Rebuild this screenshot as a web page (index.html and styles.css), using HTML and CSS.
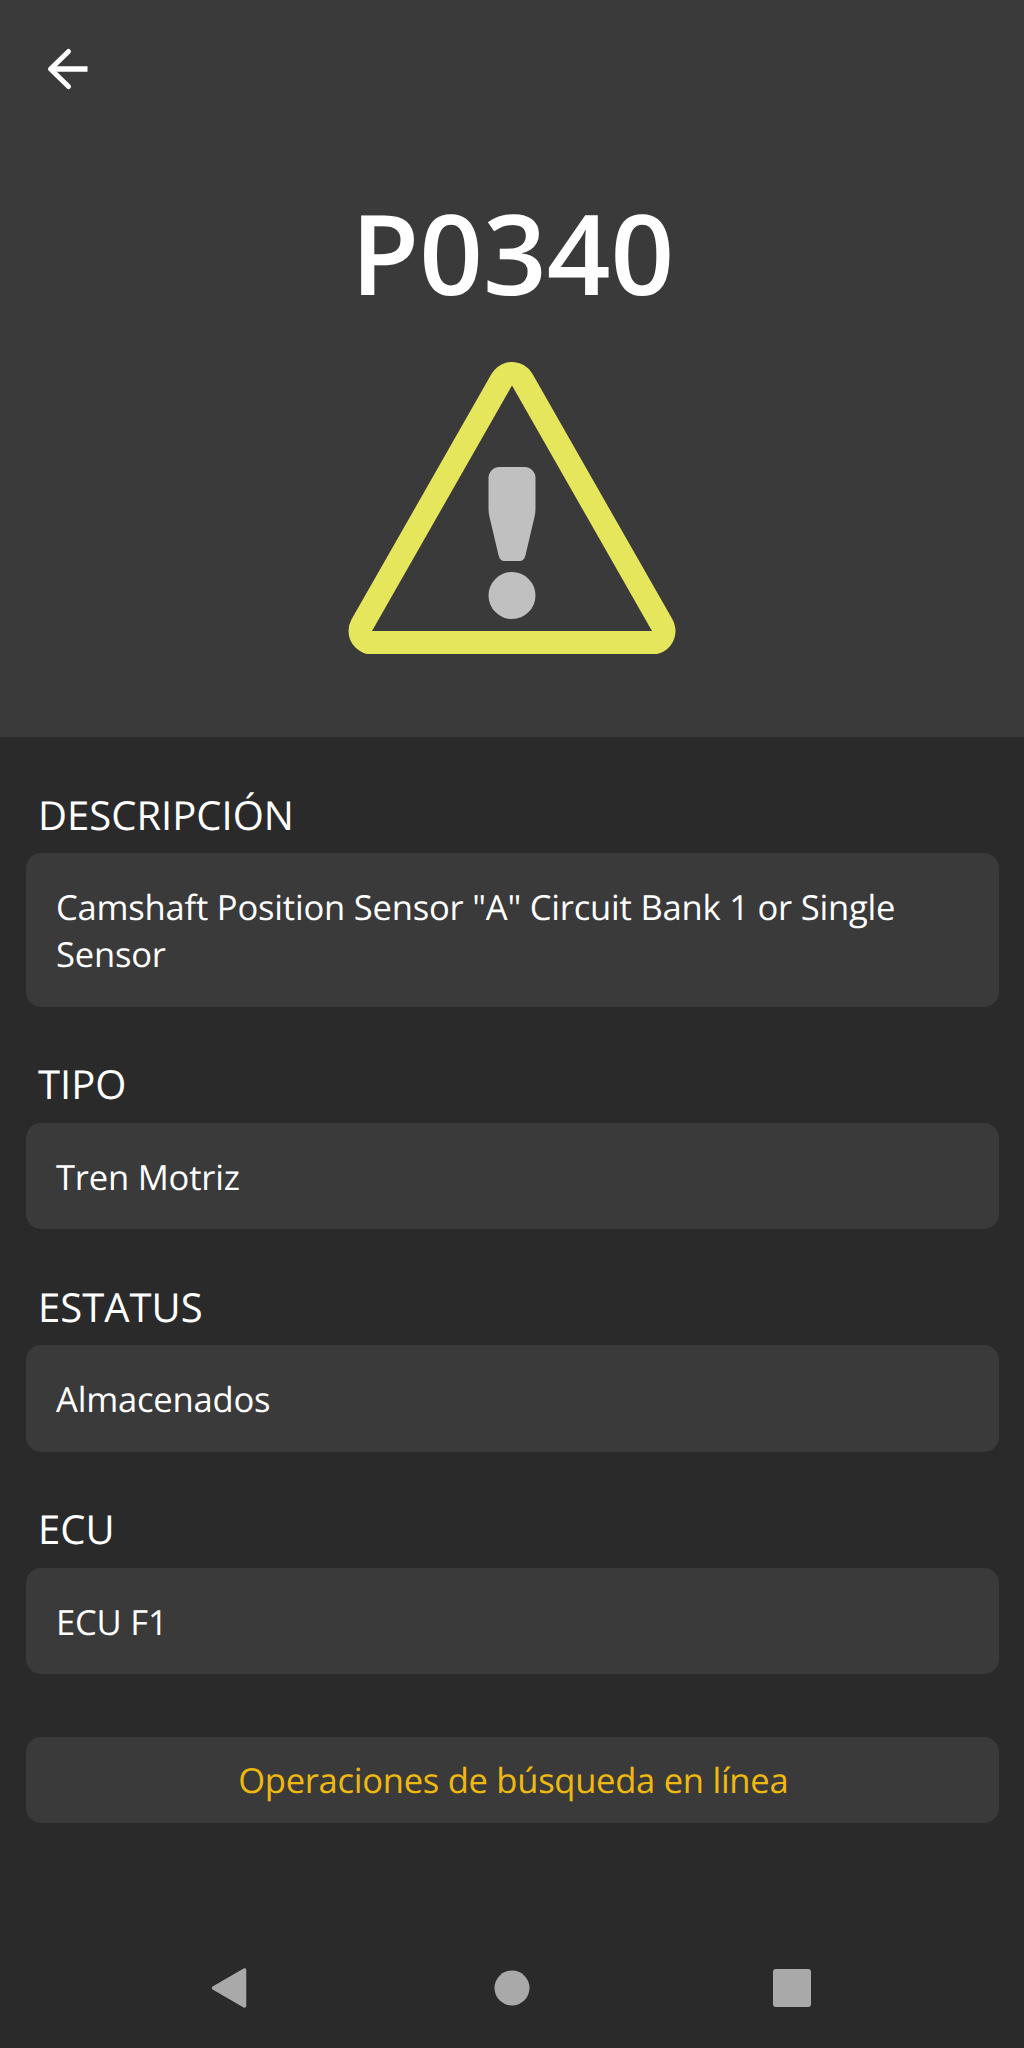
FILE: index.html
```html
<!DOCTYPE html>
<html lang="es">
<head>
    <meta charset="UTF-8">
    <meta name="viewport" content="width=device-width, initial-scale=1.0">
    <title>P0340</title>
    <link rel="stylesheet" href="styles.css">
</head>
<body>
    <header class="header">
        <a class="back" href="#" aria-label="Volver">
            <svg width="44" height="44" viewBox="0 0 44 44" fill="none" stroke="#fff">
                <path d="M43.500 22H8" stroke-width="5.500"/>
                <path d="M24.500 4.500L6.500 22l18 17.500" stroke-width="5" stroke-linecap="round" stroke-linejoin="round"/>
            </svg>
        </a>
        <h1 class="code">P0340</h1>
        <svg class="warning" width="328" height="292" viewBox="0 0 328 292">
            <path class="triangle" d="M164 23.500L304 269H24Z"/>
            <path class="mark" d="M151.500 105h25a11 11 0 0 1 11 11v31q0 4-1 8l-9 38q-1.300 6-6 6h-15q-4.700 0-6-6l-9-38q-1-4-1-8v-31a11 11 0 0 1 11-11z"/>
            <circle class="mark" cx="164" cy="233.500" r="23.500"/>
        </svg>
    </header>
    <main class="content">
        <section class="item">
            <h2>DESCRIPCIÓN</h2>
            <div class="card">Camshaft Position Sensor "A" Circuit Bank 1 or Single Sensor</div>
        </section>
        <section class="item">
            <h2>TIPO</h2>
            <div class="card">Tren Motriz</div>
        </section>
        <section class="item">
            <h2>ESTATUS</h2>
            <div class="card">Almacenados</div>
        </section>
        <section class="item">
            <h2>ECU</h2>
            <div class="card">ECU F1</div>
        </section>
        <button class="search">Operaciones de búsqueda en línea</button>
    </main>
    <nav class="navbar">
        <svg width="44" height="44" viewBox="0 0 44 44">
            <path d="M3.500 22L34.500 4v36z" stroke="#a9a9a9" stroke-width="3.500" stroke-linejoin="round"/>
        </svg>
        <svg width="44" height="44" viewBox="0 0 44 44">
            <circle cx="22" cy="22" r="17.500"/>
        </svg>
        <svg width="44" height="44" viewBox="0 0 44 44">
            <rect x="3" y="3" width="38" height="38" rx="3"/>
        </svg>
    </nav>
</body>
</html>
```
FILE: styles.css
```css
* {
    box-sizing: border-box;
}
body {
    font-family: "Open Sans", sans-serif;
    margin: 0;
    height: 2048px;
    display: flex;
    flex-direction: column;
    background-color: #2a2a2a;
    color: #fff;
    text-rendering: geometricPrecision;
}
.header {
    height: 737px;
    background-color: #3a3a3a;
    display: flex;
    flex-direction: column;
    align-items: center;
}
.back {
    align-self: flex-start;
    margin: 47px 0 0 44px;
    height: 44px;
}
.code {
    margin: 85px 0 0;
    padding-left: 1px;
    font-size: 111.5px;
    font-weight: 600;
    line-height: 153px;
}
.warning {
    margin-top: 33px;
}
.triangle {
    fill: #3a3a3a;
    stroke: #e5e65b;
    stroke-width: 47px;
    stroke-linejoin: round;
    paint-order: stroke;
}
.mark {
    fill: #c0c0c0;
}
.content {
    flex: 1;
    padding: 0 25.5px 0 26px;
}
.item {
    padding-top: 50.7px;
}
.item h2 {
    margin: 0 0 10.9px 12px;
    font-size: 40px;
    font-weight: 400;
    line-height: 54.4px;
}
.card {
    padding: 31px 30px 28.2px;
    border-radius: 15px;
    background-color: #3a3a3a;
    font-size: 34.6px;
    letter-spacing: -0.22px;
    line-height: 47.3px;
}
.search {
    display: block;
    width: 100%;
    height: 86px;
    margin-top: 62.7px;
    padding: 2px 0 0 2px;
    border: none;
    border-radius: 15px;
    background-color: #3a3a3a;
    color: #f0b90f;
    font-family: inherit;
    font-size: 34.6px;
    letter-spacing: -0.29px;
    text-rendering: inherit;
}
.navbar {
    height: 120px;
    padding: 0 210px;
    display: flex;
    align-items: center;
    justify-content: space-between;
    fill: #a9a9a9;
}
```
